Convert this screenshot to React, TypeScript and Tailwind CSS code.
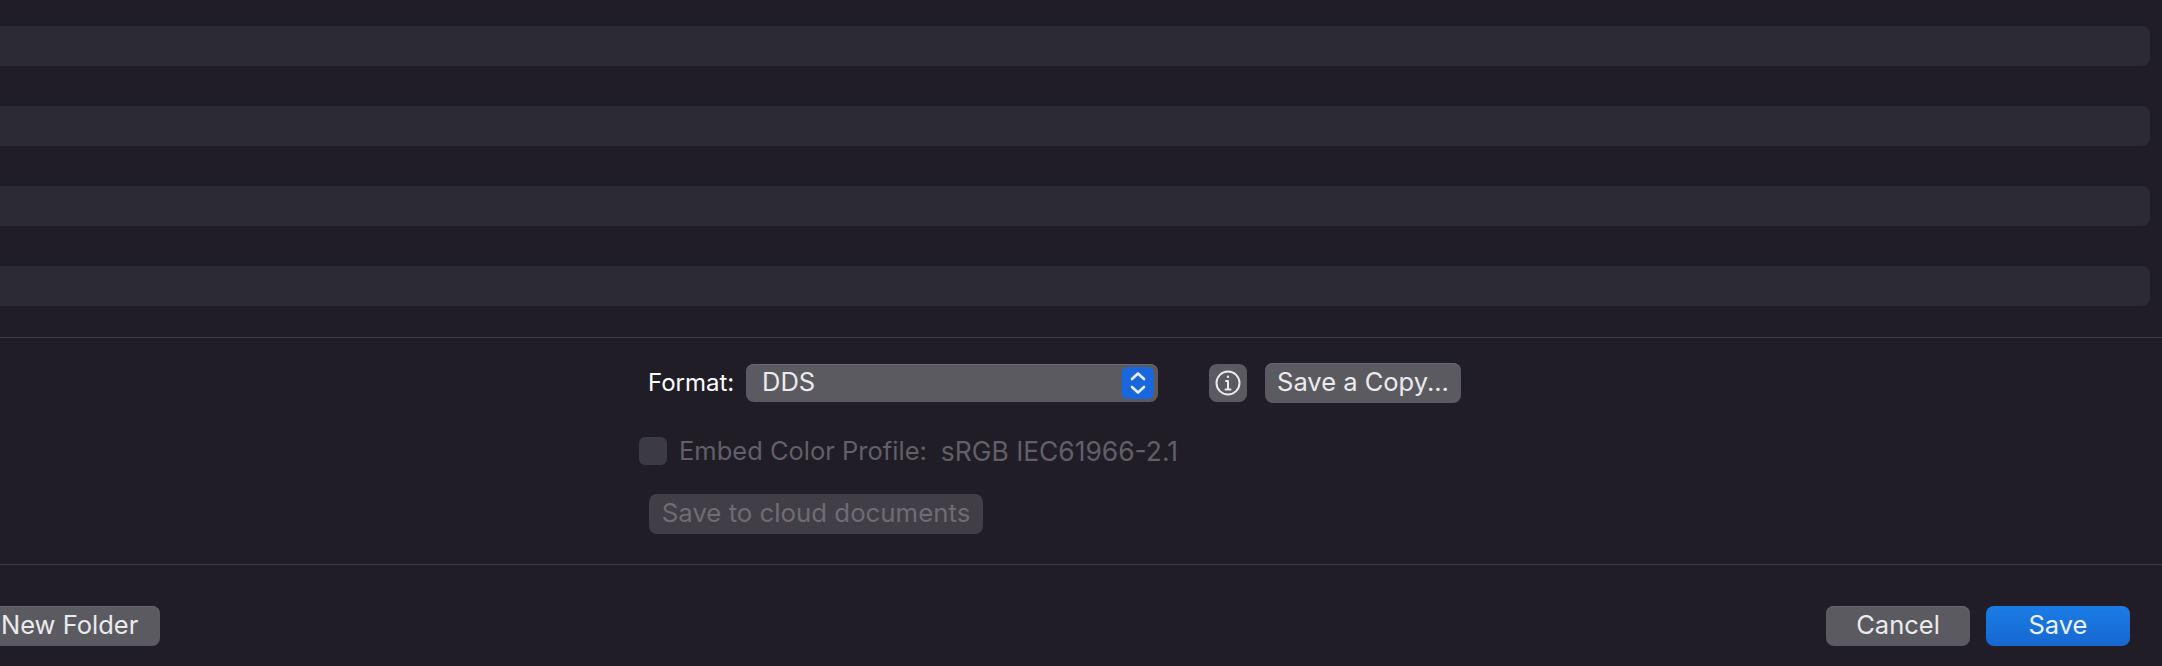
const rows = [0, 1, 2, 3];

const btn =
  "flex items-center justify-center h-10 pb-[2px] rounded-lg bg-[#5c5a61] text-[25.5px] leading-none text-[#ebeaed] shadow-[inset_0_1px_0_#69676e]";

export default function App() {
  return (
    <div className="flex flex-col w-[2162px] h-[666px] overflow-hidden bg-[#201d27] font-['Inter','Liberation_Sans',sans-serif]">
      <div className="flex flex-col gap-10 pt-[26px] pr-3">
        {rows.map((r) => (
          <div key={r} className="h-10 rounded-r-lg bg-[#2c2a32]" />
        ))}
      </div>

      <div className="mt-[31px] h-[1px] bg-[#3e3b44]" />

      <div className="flex flex-col h-[226px] pl-[639px]">
        <div className="flex items-center mt-[26px] h-[38px] pl-[9px]">
          <span className="w-[98px] text-[24px] leading-none text-white">Format:</span>
          <div className="flex items-center justify-between w-[412px] h-[38px] pl-4 pr-1 rounded-lg bg-[#5c5a61] shadow-[inset_0_1px_0_#69676e]">
            <span className="text-[25.5px] leading-none text-[#ebeaed] -mt-0.5">DDS</span>
            <div className="flex items-center justify-center w-8 h-8 rounded-md bg-[#1a66dc]">
              <svg width="18" height="26" viewBox="0 0 18 26" fill="none" stroke="#e8f0fd" strokeWidth="2.6" strokeLinecap="round" strokeLinejoin="round">
                <path d="M3 9 L9 3.5 L15 9" />
                <path d="M3 17 L9 22.5 L15 17" />
              </svg>
            </div>
          </div>
          <div className="flex items-center justify-center ml-[51px] w-[38px] h-[38px] rounded-lg bg-[#5c5a61]">
            <svg width="26" height="26" viewBox="0 0 26 26" fill="none" stroke="#ebeaed" strokeWidth="2" strokeLinecap="round">
              <circle cx="13" cy="13" r="11.5" />
              <path d="M13 11 V19.5 M11 11 H13 M10.5 19.5 H15.5" />
              <circle cx="13" cy="6.8" r="1.2" fill="#ebeaed" stroke="none" />
            </svg>
          </div>
          <div className={`${btn} ml-[18px] w-[196px]`}>Save a Copy...</div>
        </div>

        <div className="flex items-center mt-[35px] h-7">
          <div className="w-7 h-7 rounded-md bg-[#3c3a43]" />
          <span className="ml-[12px] text-[25.5px] leading-none text-[#625f68]">Embed Color Profile:</span>
          <span className="ml-[14px] text-[26.4px] leading-none text-[#625f68]">sRGB IEC61966-2.1</span>
        </div>

        <div className="flex items-center justify-center mt-[29px] ml-[10px] w-[334px] h-10 pb-[2px] rounded-lg bg-[#413e47] text-[25.8px] leading-none text-[#6f6c74]">
          Save to cloud documents
        </div>
      </div>

      <div className="h-[1px] bg-[#3e3b44]" />

      <div className="flex items-center justify-between mt-[41px] pr-8">
        <div className={`${btn} w-[160px] rounded-l-none justify-start pl-[1px]`}>New Folder</div>
        <div className="flex gap-4">
          <div className={`${btn} w-[144px]`}>Cancel</div>
          <div className="flex items-center justify-center w-[144px] h-10 pb-[2px] rounded-lg bg-gradient-to-b from-[#1b7ce6] to-[#1768cf] text-[25.5px] leading-none text-[#e9f2fe]">
            Save
          </div>
        </div>
      </div>
    </div>
  );
}
